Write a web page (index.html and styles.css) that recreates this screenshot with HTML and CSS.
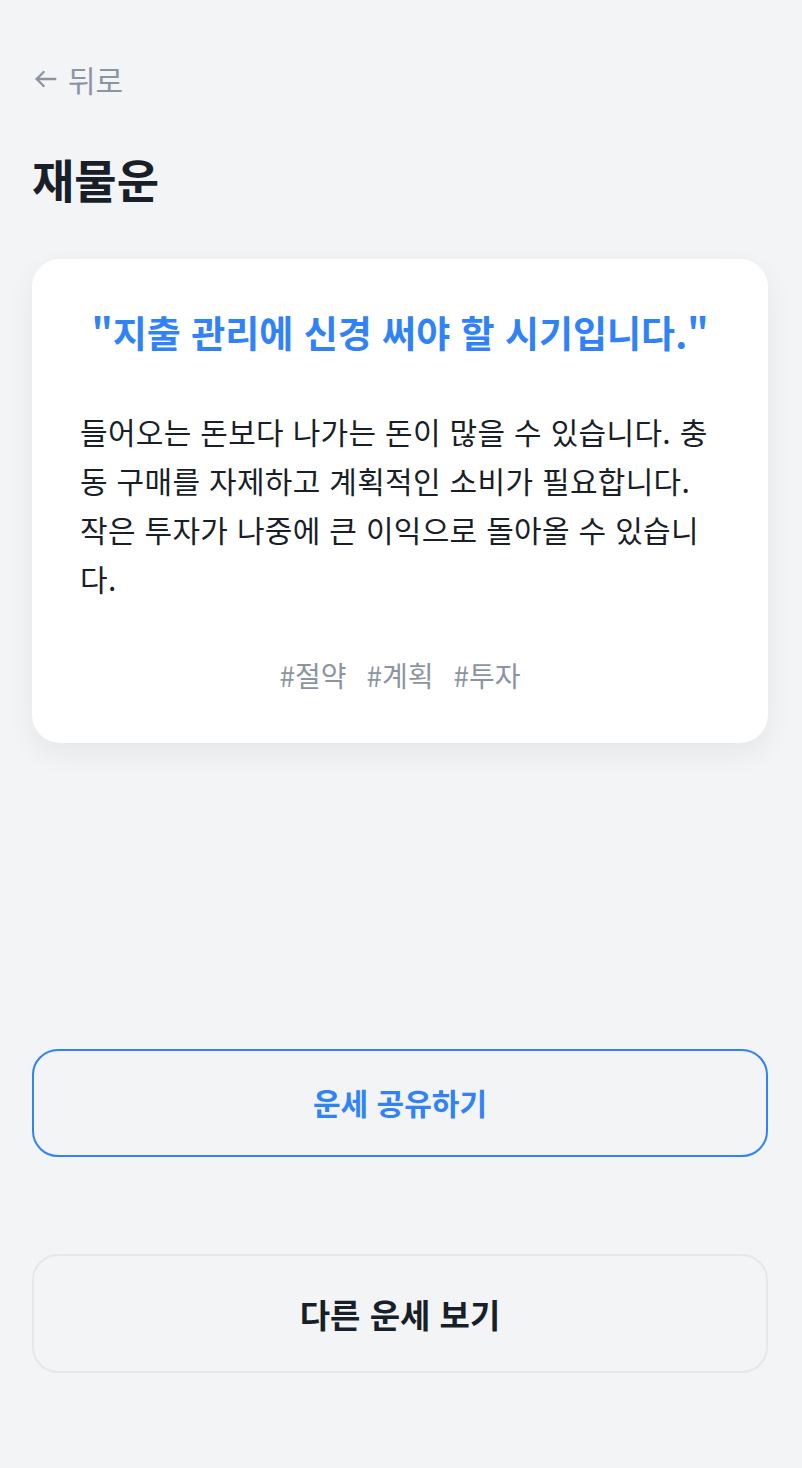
FILE: index.html
```html
<!DOCTYPE html>
<html lang="ko">
<head>
<meta charset="utf-8">
<title>재물운</title>
<link rel="stylesheet" href="styles.css">
</head>
<body>
<div class="page">
  <a class="back" href="#">
    <svg class="back-icon" viewBox="0 0 24 24" width="28" height="28" fill="none" stroke="currentColor" stroke-width="2" stroke-linecap="round" stroke-linejoin="round"><path d="M20 12H4"/><path d="M10 6l-6 6 6 6"/></svg>
    <span>뒤로</span>
  </a>
  <h1 class="title">재물운</h1>
  <section class="card">
    <p class="quote">"지출 관리에 신경 써야 할 시기입니다."</p>
    <p class="desc">들어오는 돈보다 나가는 돈이 많을 수 있습니다. 충동 구매를 자제하고 계획적인 소비가 필요합니다. 작은 투자가 나중에 큰 이익으로 돌아올 수 있습니다.</p>
    <div class="tags">
      <span class="tag">#절약</span>
      <span class="tag">#계획</span>
      <span class="tag">#투자</span>
    </div>
  </section>
  <div class="actions">
    <button class="btn btn-share" type="button">운세 공유하기</button>
    <button class="btn btn-other" type="button">다른 운세 보기</button>
  </div>
</div>
</body>
</html>
```

FILE: styles.css
```css
* { box-sizing: border-box; }
html, body {
  margin: 0;
  padding: 0;
  background: #f2f4f6;
}
body {
  font-family: "Noto Sans CJK KR", "Noto Sans", sans-serif;
  color: #191f28;
}
.page {
  padding: 59px 34px 93px 32px;
}
.back {
  display: inline-flex;
  align-items: center;
  gap: 8px;
  color: #8b95a1;
  text-decoration: none;
  font-size: 30px;
  line-height: 40px;
}
.back-icon { display: block; }
.title {
  margin: 51px 0 0;
  font-size: 46px;
  line-height: 57px;
  font-weight: 700;
  color: #191f28;
}
.card {
  margin-top: 52px;
  background: #ffffff;
  border-radius: 28px;
  padding: 48px 48px 48px;
  box-shadow: 0 10px 28px rgba(0, 0, 0, 0.06);
}
.quote {
  margin: 0;
  text-align: center;
  color: #3182f6;
  font-size: 37px;
  line-height: 50px;
  font-weight: 700;
}
.desc {
  margin: 50px 0 0;
  font-size: 30px;
  line-height: 49px;
  letter-spacing: 0.3px;
  color: #191f28;
}
.tags {
  margin-top: 53px;
  display: flex;
  justify-content: center;
  gap: 20px;
  color: #8b95a1;
  font-size: 28px;
  line-height: 39px;
}
.actions {
  margin-top: 306px;
  display: flex;
  flex-direction: column;
  gap: 97px;
}
.btn {
  display: block;
  width: 100%;
  border-radius: 26px;
  font-family: inherit;
  font-weight: 700;
  background: transparent;
  cursor: pointer;
}
.btn-share {
  height: 108px;
  border: 2px solid #3182f6;
  color: #3182f6;
  font-size: 30px;
  padding-bottom: 4px;
}
.btn-other {
  height: 119px;
  border: 2px solid #e5e8eb;
  color: #191f28;
  font-size: 33px;
}
```
